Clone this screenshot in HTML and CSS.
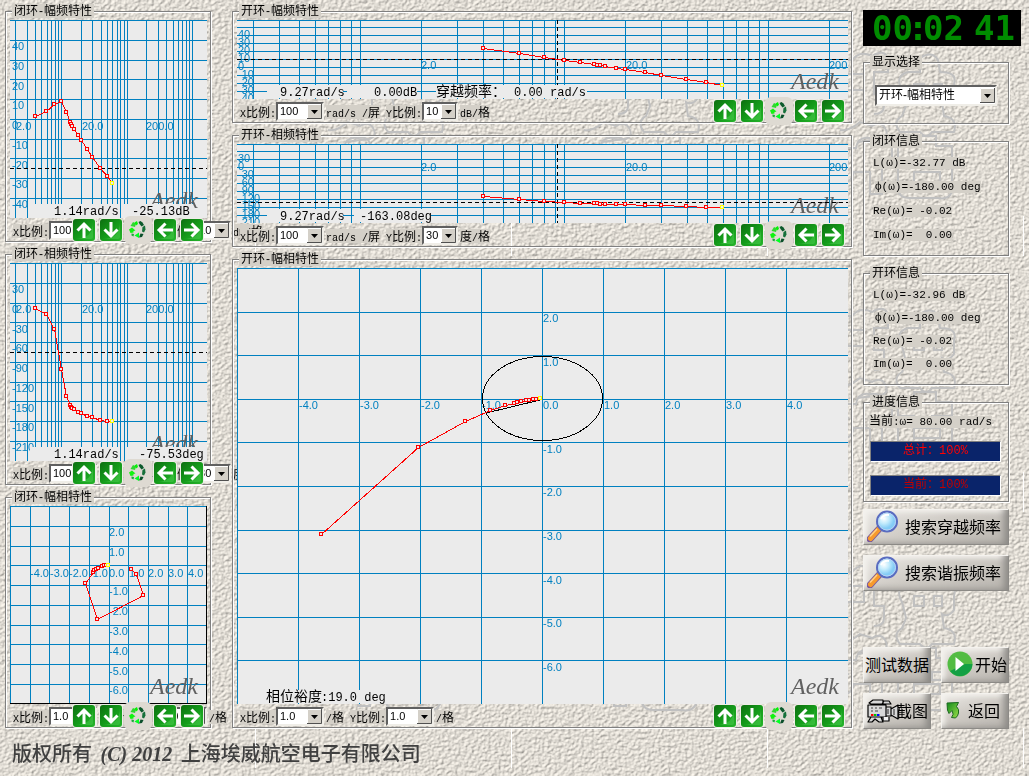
FILE: index.html
```html
<!DOCTYPE html>
<html lang="zh-CN">
<head>
<meta charset="utf-8">
<title>频率特性测试</title>
<link rel="stylesheet" href="styles.css">
</head>
<body>
<svg class="backdrop" aria-hidden="true">
  <defs>
    <filter id="stone" x="0" y="0" width="100%" height="100%" color-interpolation-filters="sRGB">
      <feTurbulence type="fractalNoise" baseFrequency="0.3 0.36" numOctaves="2" seed="7" result="n"/>
      <feDiffuseLighting in="n" surfaceScale="1" lighting-color="#fffaf1" result="lit">
        <feDistantLight azimuth="225" elevation="62"/>
      </feDiffuseLighting>
    </filter>
    <pattern id="seal" width="256" height="256" patternUnits="userSpaceOnUse">
      <g class="seal">
        <path d="M70 60h14q8-10 20-4q14-8 16 4v12h-14v22h10v12q0 8-10 8M76 74h20v16h-18zM72 130q8 2 20-8l12 4q10-6 14 4t-14 10l-14 2"/>
        <path d="M134 90q-8-14 6-18h12v-14q12-8 18 2l2 12q18 0 14 12v14q-6 8-12 4l2 14q14 2 10 16h-22q-6 8-12 0h-20q-8-10 2-16l4-10zM146 84h10v10h-10zM166 84h8v10h-8z"/>
        <path d="M70 148h18q2-12 14-10q12-2 12 8h10v14l-10 6v28h-12v-22h-16q-4 14-16 10v-16l10-4zM130 146h16v-10h22v10h16v14h-20v8h20v24q-4 8-14 6h-28q-12 0-12-10v-20h16v-8h-16zM146 172h26v10h-26z"/>
      </g>
      <rect class="seam" x="255" y="216" width="1" height="40"/>
    </pattern>
    <linearGradient id="green" x1="0" y1="0" x2="1" y2="1"><stop offset="0" stop-color="#0d6e10"/><stop offset=".5" stop-color="#149a1a"/><stop offset="1" stop-color="#27b42c"/></linearGradient>
    <radialGradient id="lens" cx=".35" cy=".35"><stop offset="0" stop-color="#fff"/><stop offset=".5" stop-color="#c4ecfc"/><stop offset="1" stop-color="#84ccf6"/></radialGradient>
    <linearGradient id="leaf" x1="0" y1="0" x2="1" y2="1"><stop offset="0" stop-color="#128a1c"/><stop offset="1" stop-color="#9be04a"/></linearGradient>
    <symbol id="i-tile" viewBox="0 0 22 22"><rect width="22" height="22" rx="3" fill="url(#green)"/><path d="M2 20Q20 20 20 3V18q0 2-2 2z" fill="#5fdc60" opacity=".35"/></symbol>
    <symbol id="i-up" viewBox="0 0 22 22"><use href="#i-tile"/><path d="M11 19V5M4.500 11.500 11 5l6.500 6.500" class="arrow"/></symbol>
    <symbol id="i-down" viewBox="0 0 22 22"><use href="#i-tile"/><path d="M11 3v14M4.500 10.500 11 17l6.500-6.500" class="arrow"/></symbol>
    <symbol id="i-left" viewBox="0 0 22 22"><use href="#i-tile"/><path d="M19 11H5M11.500 4.500 5 11l6.500 6.500" class="arrow"/></symbol>
    <symbol id="i-right" viewBox="0 0 22 22"><use href="#i-tile"/><path d="M3 11h14M10.500 4.500 17 11l-6.500 6.500" class="arrow"/></symbol>
    <symbol id="i-cycle" viewBox="0 0 22 22">
      <path d="M3.500 7 6 3l3 1.500L8 8l-2-.5z" fill="#2fd82f"/><path d="M7.500 3.500 10 2l1 3-2 1.500z" fill="#06f206"/>
      <path d="M11.500 3l2-1 2 1.500L17 6l-2.500 1.500-2-2.500z" fill="#0d5a2c"/><path d="M15.500 8l2.500-1.500.5 4-1.500 3-2-1z" fill="#16703a"/>
      <path d="M13.500 14.500l3 .5-1.500 3-3 .5z" fill="#0a4f2a"/><path d="M12 13.500v5.500l-4.500-2.500z" fill="#00ff22"/>
      <path d="M2 10.500l3-2 3.500 3-2 .5V13.500l-3 .5z" fill="#12f212"/><path d="M4.500 14.500l2.500.5-.5 2.500L4.500 16.500z" fill="#1aa83a"/>
    </symbol>
    <symbol id="i-find" viewBox="0 0 32 32">
      <path d="M3 29 12 19" stroke="#7a5a9c" stroke-width="7" stroke-linecap="round"/><path d="M3.500 28.500 11.500 19.500" stroke="#f79a2c" stroke-width="5" stroke-linecap="round"/><path d="M3 26.500 10 19" stroke="#ffd08a" stroke-width="1.500"/>
      <circle cx="20" cy="11.500" r="10" fill="url(#lens)" stroke="#5a6cc0" stroke-width="2"/><circle cx="20" cy="11.500" r="8.500" fill="none" stroke="#b9d4f4"/>
      <path d="M14 9q3-5 8-4" stroke="#fff" stroke-width="2" fill="none"/>
    </symbol>
    <symbol id="i-play" viewBox="0 0 26 26"><circle cx="13" cy="13" r="12.500" fill="#52bc42"/><path d="M25.500 13A12.500 12.500 0 0 1 3 20L18 13z" fill="#14a044"/><path d="M8.500 6 17 13 8.500 20z" fill="#fff"/></symbol>
    <symbol id="i-back" viewBox="0 0 14 18"><path d="M1 2 12.500 1.500 10.500 5.500q3 3 2 6.500-.5 3-3 5l-4-.5q3-3 .5-7L3 12.500 1.500 9z" fill="url(#leaf)" stroke="#1b6a20"/></symbol>
    <symbol id="i-camera" viewBox="0 0 34 26">
      <g fill="#d8d8d8" stroke="#000" stroke-width="1.200" stroke-linejoin="round"><path d="M3 4 7 1h10v4H5zM16 5l2-3h5l2 3zM2 6h18v12H2zM20 8h5v9h-5zM25 10l7-4v14l-7-4zM5 18l-3 5h4l3-3 4 3h4l-2-5z"/><path d="M17 18v4h6v-4" fill="#f2f2f2"/></g>
      <path d="M5 9h2M9 9h2M13 9h3M5 12h2M9 12h3M22 10v5M28 10v6" stroke="#444" stroke-width="1.200"/>
      <path d="M5 15h2.500v2H5z" fill="#f00"/><path d="M8 15h2.500v2H8z" fill="#00c000"/><path d="M11 15h2.500v2H11z" fill="#00f"/>
    </symbol>
    <symbol id="i-drop" viewBox="0 0 15 15"><path d="M0 0h15v15H0z" fill="#d4d0c8"/><path d="M.5 15V.5H15" stroke="#fff" fill="none"/><path d="M14.500 0v14.500H0" stroke="#505050" fill="none"/><path d="M4 6h7L7.500 10z"/></symbol>
  </defs>
  <rect width="100%" height="100%" filter="url(#stone)"/>
  <rect width="100%" height="100%" fill="url(#seal)"/>
</svg>

<main class="desk">
  <div class="side">
    <fieldset class="panel">
      <legend>闭环<i>-</i>幅频特性</legend>
      <svg class="chart" data-chart="closedMag"></svg>
      <div class="bar" data-x="100" data-xu="rad/s /屏" data-y="10" data-yu="dB/格"></div>
    </fieldset>
    <fieldset class="panel">
      <legend>闭环<i>-</i>相频特性</legend>
      <svg class="chart" data-chart="closedPhase"></svg>
      <div class="bar" data-x="100" data-xu="rad/s /屏" data-y="30" data-yu="度/格"></div>
    </fieldset>
    <fieldset class="panel">
      <legend>闭环<i>-</i>幅相特性</legend>
      <svg class="chart" data-chart="closedPolar"></svg>
      <div class="bar" data-x="1.0" data-xu="/格" data-y="1.0" data-yu="/格"></div>
    </fieldset>
  </div>

  <div class="centre">
    <fieldset class="panel">
      <legend>开环<i>-</i>幅频特性</legend>
      <svg class="chart strip" data-chart="openMag"></svg>
      <div class="bar" data-x="100" data-xu="rad/s /屏" data-y="10" data-yu="dB/格"></div>
    </fieldset>
    <fieldset class="panel">
      <legend>开环<i>-</i>相频特性</legend>
      <svg class="chart strip" data-chart="openPhase"></svg>
      <div class="bar" data-x="100" data-xu="rad/s /屏" data-y="30" data-yu="度/格"></div>
    </fieldset>
    <fieldset class="panel">
      <legend>开环<i>-</i>幅相特性</legend>
      <svg class="chart tall" data-chart="openPolar"></svg>
      <div class="bar" data-x="1.0" data-xu="/格" data-y="1.0" data-yu="/格"></div>
    </fieldset>
  </div>

  <div class="info">
    <div class="lcd">00<span class="colon">:</span>02<span class="gap"></span>41</div>
    <fieldset class="panel view">
      <legend>显示选择</legend>
      <span class="combo"><select aria-label="显示选择"><option>开环-幅相特性</option></select><svg><use href="#i-drop"/></svg></span>
    </fieldset>
    <fieldset class="panel values">
      <legend>闭环信息</legend>
      <p><span>L(ω)=-32.77 dB</span></p>
      <p class="phi"><span>ф(ω)=-180.00 deg</span></p>
      <p><span>Re(ω)= -0.02</span></p>
      <p><span>Im(ω)=&nbsp; 0.00</span></p>
    </fieldset>
    <fieldset class="panel values tight">
      <legend>开环信息</legend>
      <p><span>L(ω)=-32.96 dB</span></p>
      <p class="phi"><span>ф(ω)=-180.00 deg</span></p>
      <p><span>Re(ω)= -0.02</span></p>
      <p><span>Im(ω)=&nbsp; 0.00</span></p>
    </fieldset>
    <fieldset class="panel progress">
      <legend>进度信息</legend>
      <p><span><b>当前</b>:ω= 80.00 rad/s</span></p>
      <div class="meter" role="progressbar" aria-valuenow="100" aria-label="总计"><b>总计：</b>100%</div>
      <div class="meter dim" role="progressbar" aria-valuenow="100" aria-label="当前"><b>当前：</b>100%</div>
    </fieldset>
    <div class="actions">
      <button class="wide"><svg class="ic32"><use href="#i-find"/></svg>搜索穿越频率</button>
      <button class="wide"><svg class="ic32"><use href="#i-find"/></svg>搜索谐振频率</button>
      <button class="apart">测试数据</button>
      <button class="apart play"><svg class="ic26"><use href="#i-play"/></svg>开始</button>
      <button class="shot"><svg class="cam"><use href="#i-camera"/></svg><span>截图</span></button>
      <button class="back"><svg class="ic14"><use href="#i-back"/></svg>返回</button>
    </div>
  </div>
</main>
<footer>版权所有 <em>(C) 2012</em> 上海埃威航空电子有限公司</footer>
<script src="charts.js"></script>
</body>
</html>
```
FILE: styles.css
```css
* { box-sizing: border-box; }

body {
  margin: 0;
  background: #dedad2;
  color: #000;
  font: 12px/14px "Liberation Sans", "Noto Sans CJK SC", sans-serif;
}

.backdrop { position: fixed; inset: 0; z-index: -1; width: 100%; height: 100%; }
.seal { fill: none; stroke: #c0c0c0; stroke-width: 2; }
.seam { fill: #fff; }
.arrow { fill: none; stroke: #fff; stroke-width: 3; }

.desk {
  display: grid;
  grid-template-columns: 206px minmax(0, 1fr) 158px;
  gap: 11px;
  padding: 4px 8px 0 5px;
  align-items: start;
}
.side, .centre { display: flex; flex-direction: column; gap: 5px; }
.centre { position: relative; z-index: 1; padding-left: 10px; }

.panel {
  min-width: 0;
  margin: 0;
  padding: 2px 3px 0 4px;
  border: 1px solid #808080;
  box-shadow: 1px 1px 0 #fff, inset 1px 1px 0 #fff;
}
.panel legend {
  height: 14px;
  margin-left: 2px;
  padding: 0 2px;
  background: #d4d0c8;
  white-space: nowrap;
}
legend i { display: inline-block; width: 6px; font-style: normal; text-align: center; }

.chart { display: block; width: 100%; height: 198px; background: #ebebeb; overflow: hidden; }
.chart.strip { height: 79px; }
.chart.tall { height: 436px; }
.grid { stroke: #0080c0; shape-rendering: crispEdges; }
.edge { stroke: #000; shape-rendering: crispEdges; }
.cursor { stroke: #000; stroke-dasharray: 4 3; shape-rendering: crispEdges; }
.curve { fill: none; stroke: #f00; shape-rendering: crispEdges; }
.dot { fill: #ebebeb; stroke: #f00; shape-rendering: crispEdges; }
.dot.last { stroke: #ff0; }
.ring { fill: none; stroke: #000; shape-rendering: crispEdges; }
.mask { fill: #ebebeb; }
.tick { fill: #0080c0; font: 11px "Liberation Sans", sans-serif; }
.brand { fill: #606060; font: italic 24px "Liberation Serif", serif; text-anchor: end; }
.read { font: 12px "Liberation Mono", "Noto Sans CJK SC", monospace; white-space: pre; }
.read .zh { font-size: 14px; }

.bar {
  position: relative;
  display: flex;
  align-items: flex-end;
  height: 23px;
  padding: 0 0 1px 3px;
  white-space: nowrap;
}
.bar > * { flex: none; }
.bar label, .bar .unit {
  height: 14px;
  margin: 0 0 2px;
  background: #d4d0c8;
  font: 10px/14px "Liberation Mono", monospace;
}
.bar .unit { margin-left: 2px; }
.bar label { width: 36px; }
.bar .unit + label { margin-left: 6px; }
.bar b, .values b, .progress b { font: 12px/14px "Noto Sans CJK SC", sans-serif; }

.combo {
  position: relative;
  display: block;
  height: 19px;
  background: #fff;
  border: 2px solid;
  border-color: #606060 #f0eee8 #f0eee8 #606060;
}
.combo select {
  display: block;
  width: 100%;
  height: 15px;
  padding: 0 0 0 2px;
  border: 0;
  background: none;
  color: #000;
  appearance: none;
  font: 11px/15px "Liberation Sans", "Noto Sans CJK SC", sans-serif;
}
.combo svg { position: absolute; right: 0; top: 0; width: 15px; height: 15px; pointer-events: none; }
.w48 { width: 48px; }
.w36 { width: 36px; }

.nav { position: absolute; right: 4px; top: 1px; display: flex; gap: 5px; }
.nav button { width: 22px; height: 22px; padding: 0; border: 0; border-radius: 3px; background: #dedad2; box-shadow: 0 0 0 1px #f0eee8; }
.nav button.plain { box-shadow: 0 0 0 3px #dedad2; }
.nav svg { display: block; width: 22px; height: 22px; }

.info { padding-top: 6px; }
.info .panel { width: 146px; }
.lcd {
  height: 36px;
  padding-left: 9px;
  background: #000;
  color: #008c00;
  font: 700 34px/36px "DejaVu Sans Mono", monospace;
  white-space: nowrap;
}
.lcd .colon { display: inline-flex; justify-content: center; width: 10px; }
.lcd .gap { display: inline-block; width: 10px; }
.view { height: 69px; margin-top: 9px; padding: 16px 11px 0; }
.view legend { margin-left: -5px; }
.view .combo { height: 21px; }
.view select { height: 17px; font-size: 12px; line-height: 17px; }
.view .combo svg { height: 17px; }
.values { height: 122px; padding: 3px 0 0 9px; }
.info .values { margin-top: 10px; }
.info .values legend { margin-left: -3px; }
.values p { height: 24px; margin: 0; padding-top: 4px; }
.values .phi { padding-left: 2px; }
.values span, .progress p span { background: #d4d0c8; font: 11px/14px "Liberation Mono", monospace; }
.info .tight { height: 119px; margin-top: 10px; }
.tight p { height: 23px; }
.progress { height: 107px; padding: 4px 7px 0 6px; }
.info .progress { margin-top: 10px; }
.info .progress legend { margin-left: 0; }
.progress p { height: 28px; margin: 0; }
.progress p span { margin-left: -1px; }
.meter {
  height: 21px;
  margin-bottom: 13px;
  background: #0a246a;
  border: 1px solid;
  border-color: #808080 #fff #fff #808080;
  color: #f00;
  font: 12px/18px "Liberation Mono", monospace;
  text-align: center;
}
.meter.dim { color: #c00000; }

.actions { display: grid; grid-template-columns: 68px 68px; gap: 10px; margin-top: 7px; }
.actions button {
  position: relative;
  display: flex;
  align-items: center;
  height: 36px;
  padding: 0 0 2px 1px;
  border: 1px solid;
  border-color: #f4f2ee #8c8a86 #8c8a86 #f4f2ee;
  background: linear-gradient(160deg, #eceae6, #d0ccc6 45%, #b8b4ae);
  box-shadow: inset -9px -5px 7px -5px #8c8a86, inset 5px 4px 5px -2px #f4f2ee;
  color: #000;
  font: 16px/20px "Noto Sans CJK SC", sans-serif;
  white-space: nowrap;
}
.actions .wide { grid-column: 1 / -1; gap: 6px; padding-left: 3px; }
.actions .apart { margin-top: 46px; }
.actions .play { gap: 2px; padding-left: 5px; }
.actions .back { gap: 8px; padding-left: 4px; }
.actions .shot { justify-content: flex-end; padding-right: 2px; }
.ic32 { width: 32px; height: 32px; }
.ic26 { width: 26px; height: 26px; flex: none; }
.ic14 { width: 14px; height: 18px; }
.cam { position: absolute; left: 2px; top: 5px; width: 34px; height: 26px; }

footer {
  margin: 10px 12px 0;
  color: #404040;
  font: 500 20px/28px "Noto Sans CJK SC", sans-serif;
}
footer em { margin: 0 4px; font: italic 700 20px/28px "Liberation Serif", serif; }
```
FILE: charts.js
```js
const NS = "http://www.w3.org/2000/svg";

const closedX = [25, 36, 44, 51, 56, 60, 61, 62, 64, 68, 71, 77, 82, 90, 97, 102];
const openX = [246, 282, 307, 327, 343, 357, 360, 363, 368, 379, 388, 408, 424, 449, 469, 485];
const zip = (xs, ys) => xs.map((x, i) => [x, ys[i]]);
const span = (from, step, n) => Array.from({ length: n }, (_, i) => Math.round(from + i * step));

function decades(start, width, limit) {
  const out = [];
  for (let k = 0; start + k * width < limit; k++)
    for (let m = 1; m < 10; m++) {
      const x = Math.round(start + width * (k + Math.log10(m)));
      if (x >= 0 && x < limit) out.push(x);
    }
  return out;
}
const scale = (values, x, y, step) => values.map((v, i) => [String(v), x, y + i * step]);

const sideV = decades(-14.5, 65.6, 183);
const stripV = decades(-81, 204, 600);
const sideH = span(0, 19.75, 10);
const stripH = [0, 7, 15, 23, 31, 39, 47, 55, 63, 71];
const polarX = ["-4.0", "-3.0", "-2.0", "-1.0", "0.0", "1.0", "2.0", "3.0", "4.0"];
const polarY = ["2.0", "1.0", "", "-1.0", "-2.0", "-3.0", "-4.0", "-5.0", "-6.0"];

const charts = {
  closedMag: {
    w: 197, h: 198, v: sideV, hl: sideH, cy: 148,
    ticks: [...scale([40, 30, 20, 10, 0, -10, -20, -30, -40], 2, 30, 19.75), ["2.0", 6, 110], ["20.0", 72, 110], ["200.0", 136, 110]],
    pts: zip(closedX, [96, 91, 84, 81, 92, 102, 104, 106, 109, 115, 120, 129, 137, 148, 156, 163]),
    masks: [[20, 184, 90, 14], [114, 184, 69, 14]],
    reads: [["1.14rad/s", 44, 195], ["-25.13dB", 122, 195]]
  },
  closedPhase: {
    w: 197, h: 198, v: sideV, hl: sideH, cy: 89,
    ticks: [...scale([30, 0, -30, -60, -90, -120, -150, -180, -210], 2, 30, 19.75), ["2.0", 6, 50], ["20.0", 72, 50], ["200.0", 136, 50]],
    pts: zip(closedX, [45, 51, 66, 106, 133, 142, 144, 145, 146, 149, 150, 153, 154, 157, 158, 158]),
    masks: [[20, 184, 90, 14], [116, 184, 81, 14]],
    reads: [["1.14rad/s", 44, 195], ["-75.53deg", 129, 195]]
  },
  closedPolar: {
    w: 197, h: 198, v: span(0, 19.7, 10), hl: span(0, 19.75, 10), frame: true,
    ticks: [...polarX.map((t, i) => [t, 20 + i * 19.7, 71]), ...polarY.map((t, i) => [t, 99, 30 + i * 19.8])],
    pts: [[121, 63], [126, 68], [133, 89], [87, 113], [75, 77], [83, 66], [84, 64], [86, 63], [88, 62], [92, 60], [94, 59], [96, 59], [98, 59]]
  },
  openMag: {
    w: 611, h: 79, v: stripV, hl: stripH, cy: 39, cx: 320,
    ticks: [...scale([40, 30, 20, 10, 0, -10, -20, -30, -40], 1, 18, 8), ["2.0", 184, 49], ["20.0", 389, 49], ["200", 592, 49]],
    pts: zip(openX, [28, 33, 37, 40, 42, 44, 45, 45, 46, 48, 49, 52, 55, 59, 62, 65]),
    masks: [[30, 65, 76, 13], [110, 65, 70, 13], [199, 65, 151, 13]],
    reads: [["9.27rad/s", 43, 76], ["0.00dB", 137, 76], ["穿越频率：", 199, 76, "zh"], ["0.00 rad/s", 277, 76]]
  },
  openPhase: {
    w: 611, h: 79, v: stripV, hl: stripH, cy: 58, cx: 320,
    ticks: [...scale([30, 0, -30, -60, -90, -120, -150, -180, -210], 1, 18, 8), ["2.0", 184, 27], ["20.0", 389, 27], ["200", 592, 27]],
    pts: zip(openX, [52, 55, 57, 58, 59, 59, 59, 60, 60, 60, 60, 61, 61, 62, 63, 63]),
    masks: [[30, 65, 76, 13], [117, 65, 77, 13]],
    reads: [["9.27rad/s", 43, 76], ["-163.08deg", 123, 76]]
  },
  openPolar: {
    w: 611, h: 436, v: span(0, 61, 10), hl: span(0, 43.6, 10),
    ticks: [...polarX.map((t, i) => [t, 62 + i * 61, 141]), ...polarY.map((t, i) => [t, 306, 54 + i * 43.6])],
    pts: [[84, 266], [181, 179], [228, 153], [253, 142], [268, 137], [277, 135], [280, 134], [284, 133], [289, 132], [292, 132], [296, 131], [299, 131], [303, 130]],
    ring: [305, 130, 60, 42], margin: [303, 132, 249, 145],
    masks: [[28, 422, 118, 13]],
    reads: [["相位裕度", 29, 433, "zh"], [":19.0 deg", 84, 433]]
  }
};

function draw(svg) {
  const c = charts[svg.dataset.chart];
  const sx = svg.clientWidth / c.w, sy = svg.clientHeight / c.h;
  const X = v => Math.round(v * sx), Y = v => Math.round(v * sy);
  const W = svg.clientWidth, H = svg.clientHeight;
  svg.replaceChildren();
  const add = (tag, attrs, text) => {
    const el = document.createElementNS(NS, tag);
    for (const k in attrs) el.setAttribute(k, attrs[k]);
    if (text) el.textContent = text;
    svg.append(el);
  };
  const line = (cls, x1, y1, x2, y2) => add("line", { class: cls, x1, y1, x2, y2 });

  c.v.forEach(v => line("grid", X(v) + 0.5, 0, X(v) + 0.5, H));
  c.hl.forEach(v => line("grid", 0, Y(v) + 0.5, W, Y(v) + 0.5));
  if (c.frame) {
    line("edge", W - 0.5, 0, W - 0.5, H);
    line("edge", 0, H - 0.5, W, H - 0.5);
  }
  add("text", { class: "brand", x: W - 9, y: H - 10 }, "Aedk");
  c.ticks.forEach(([t, x, y]) => t && add("text", { class: "tick", x: X(x), y: Y(y) }, t));
  if (c.cy) line("cursor", 0, Y(c.cy) + 0.5, W, Y(c.cy) + 0.5);
  if (c.cx) line("cursor", X(c.cx) + 0.5, 0, X(c.cx) + 0.5, H);
  if (c.ring) add("ellipse", { class: "ring", cx: X(c.ring[0]) + 0.5, cy: Y(c.ring[1]) + 0.5, rx: X(c.ring[2]), ry: Y(c.ring[3]) });
  if (c.margin) line("ring", X(c.margin[0]), Y(c.margin[1]), X(c.margin[2]), Y(c.margin[3]));
  add("polyline", { class: "curve", points: c.pts.map(([x, y]) => (X(x) + 0.5) + "," + (Y(y) + 0.5)).join(" ") });
  c.pts.forEach(([x, y], i) => add("rect", {
    class: i === c.pts.length - 1 ? "dot last" : "dot", x: X(x) - 1.5, y: Y(y) - 1.5, width: 3, height: 3
  }));
  (c.masks || []).forEach(([x, y, w, h]) => add("rect", { class: "mask", x: X(x), y: Y(y), width: w, height: h }));
  (c.reads || []).forEach(([t, x, y, zh]) => {
    add("text", { class: "read", x: X(x), y: Y(y) });
    const span = document.createElementNS(NS, "tspan");
    if (zh) span.setAttribute("class", zh);
    span.textContent = t;
    svg.lastChild.append(span);
  });
}

const wrapHan = t => t.replace(/[\u4e00-\u9fff]+/g, "<b>$&</b>");

document.querySelectorAll(".bar").forEach((bar, i) => {
  const d = bar.dataset;
  const combo = (id, value, cls) =>
    `<span class="combo ${cls}"><select id="${id}"><option>${value}</option></select><svg><use href="#i-drop"/></svg></span>`;
  const nav = [["up", "上移"], ["down", "下移"], ["cycle", "复位"], ["left", "左移"], ["right", "右移"]];
  bar.innerHTML =
    `<label for="x${i}">${wrapHan("X比例:")}</label>` + combo("x" + i, d.x, "w48") +
    `<span class="unit">${wrapHan(d.xu)}</span>` +
    `<label for="y${i}">${wrapHan("Y比例:")}</label>` + combo("y" + i, d.y, d.y === "1.0" ? "w48" : "w36") +
    `<span class="unit">${wrapHan(d.yu)}</span>` +
    `<span class="nav">` + nav.map(([n, t]) =>
      `<button class="${n === "cycle" ? "plain" : ""}" aria-label="${t}"><svg><use href="#i-${n}"/></svg></button>`).join("") + `</span>`;
});

const drawAll = () => document.querySelectorAll(".chart").forEach(draw);
drawAll();
addEventListener("resize", drawAll);
```
